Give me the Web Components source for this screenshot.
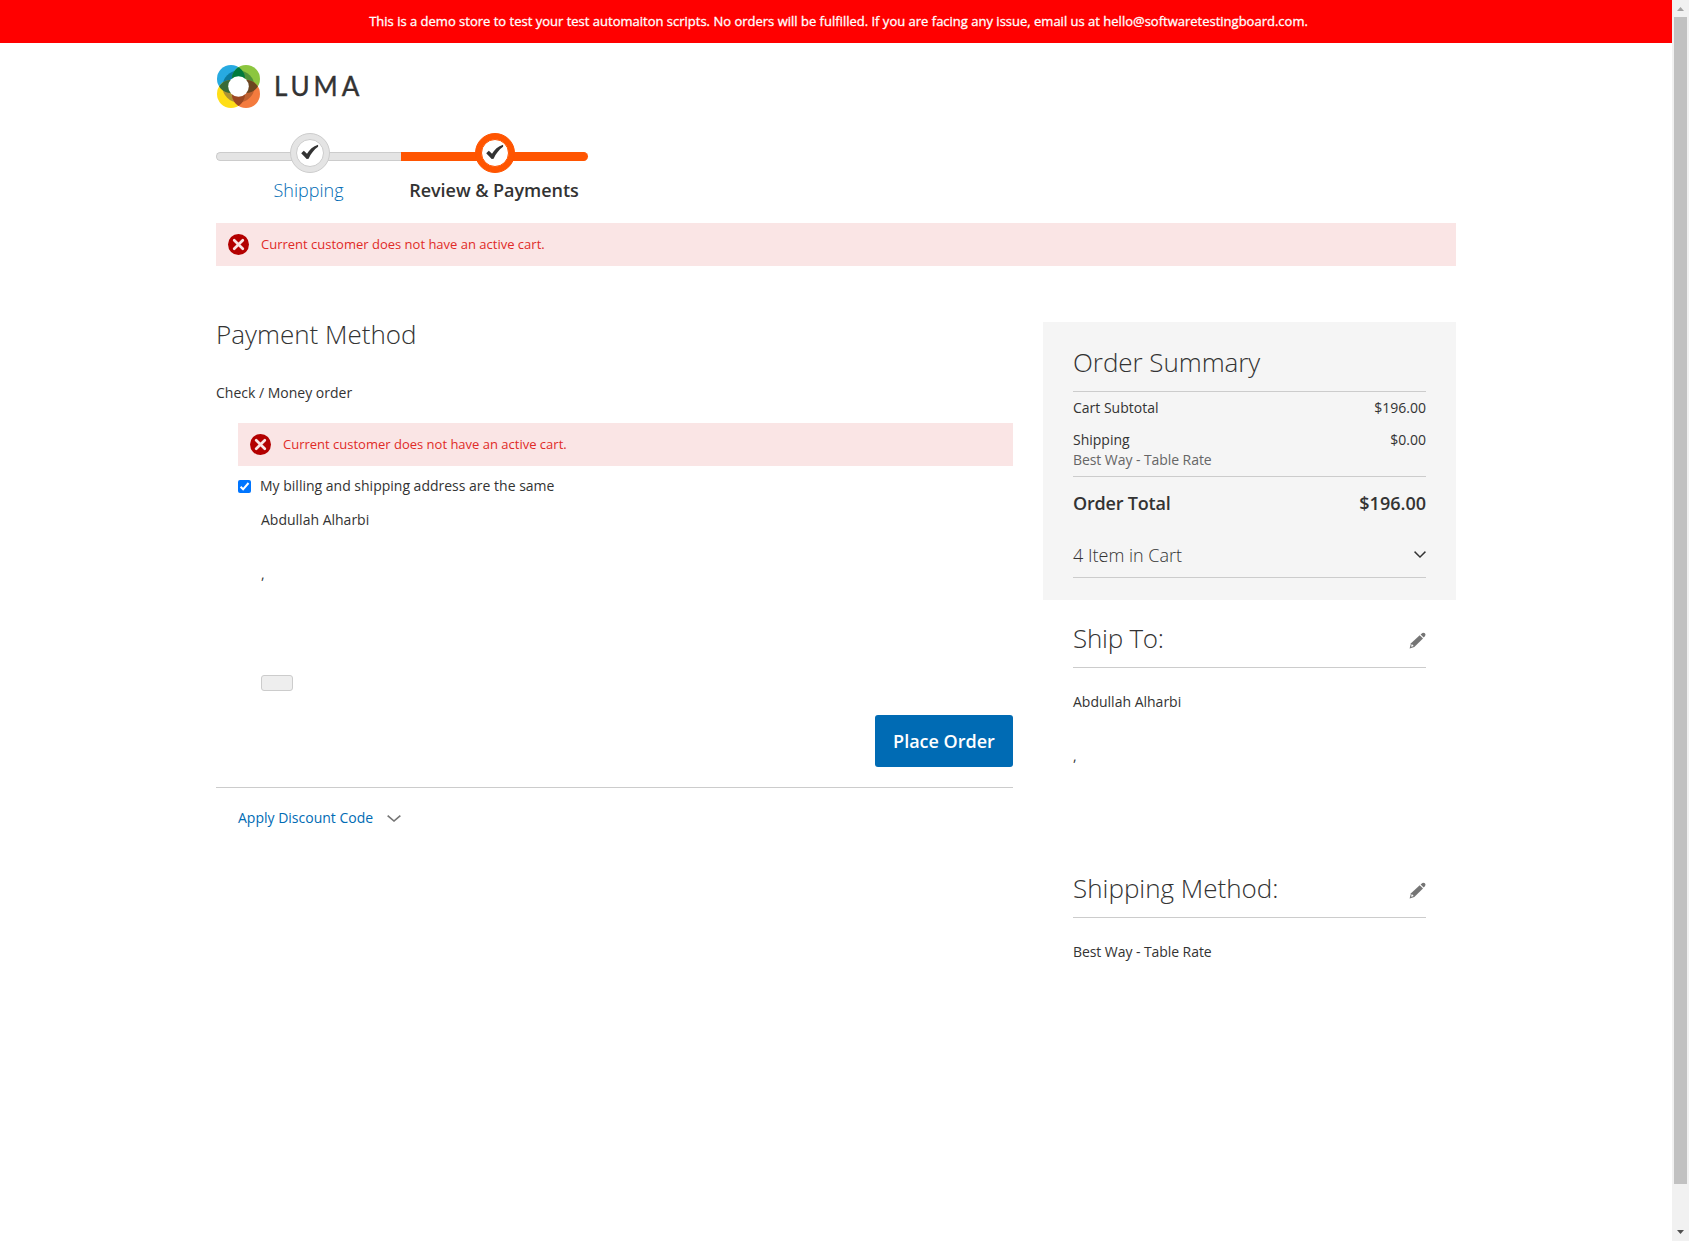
<!DOCTYPE html>
<html lang="en">
<head>
<meta charset="utf-8">
<title>Checkout</title>
<style>
html,body{margin:0;height:100%;overflow:hidden;background:#fff}
body{font:400 14px/20px "Open Sans","Noto Sans",sans-serif;color:#333}
</style>
</head>
<body>
<checkout-page></checkout-page>
<script>
function define(name, css, html) {
  customElements.define(name, class extends HTMLElement {
    constructor() {
      super();
      const root = this.attachShadow({mode: 'open'});
      const t = document.createElement('template');
      t.innerHTML = '<style>*{box-sizing:border-box}:host{display:block;box-sizing:border-box}' + css + '</style>' +
        (typeof html === 'function' ? html(this) : html);
      root.append(t.content.cloneNode(true));
    }
  });
}

define('demo-banner',
  ':host{height:43px;background:#f00;color:#fff;font-size:13px;font-weight:400;-webkit-text-stroke:.3px #fff;line-height:43px;text-align:center;white-space:nowrap;padding-left:5px}',
  '<span><slot></slot></span>');

define('luma-logo',
  ':host{display:flex;height:44px;align-items:center;gap:13px;padding-left:1px}svg{display:block;flex:none}span{font:400 26px/42px Lato,sans-serif;height:44px;letter-spacing:3.9px;-webkit-text-stroke:.4px #333}',
  `<svg width="44" height="44" viewBox="0 0 44 44">
    <defs><clipPath id="tl"><circle cx="14" cy="14" r="14"/></clipPath><clipPath id="tr"><circle cx="29" cy="14" r="14"/></clipPath><clipPath id="bl"><circle cx="14" cy="29" r="14"/></clipPath><clipPath id="br"><circle cx="29" cy="29" r="14"/></clipPath></defs>
    <circle cx="14" cy="14" r="14" fill="#27aae1"/><circle cx="29" cy="14" r="14" fill="#8cc63f"/>
    <circle cx="14" cy="29" r="14" fill="#ffde17"/><circle cx="29" cy="29" r="14" fill="#f47b3e"/>
    <g clip-path="url(#tl)"><circle cx="21.5" cy="21.5" r="16" fill="#0c7a9c"/></g>
    <g clip-path="url(#tr)"><circle cx="21.5" cy="21.5" r="16" fill="#4f9138"/></g>
    <g clip-path="url(#bl)"><circle cx="21.5" cy="21.5" r="16" fill="#ad9233"/></g>
    <g clip-path="url(#br)"><circle cx="21.5" cy="21.5" r="16" fill="#bf602f"/></g>
    <g clip-path="url(#tl)"><circle cx="29" cy="14" r="14" fill="#007a3d"/><circle cx="14" cy="29" r="14" fill="#386b36"/></g>
    <g clip-path="url(#br)"><circle cx="29" cy="14" r="14" fill="#6b4520"/><circle cx="14" cy="29" r="14" fill="#9b4722"/></g>
    <circle cx="21.5" cy="21.5" r="10.3" fill="#fff"/>
  </svg><span>LUMA</span>`);

define('progress-step',
  `:host{display:grid;width:185px;grid-template-rows:40px 34px;justify-items:center;--fill:#e4e4e4;--edge:#ccc;font-size:18px;font-weight:300;color:#006bb4;white-space:nowrap}
   :host([active]){--fill:#ff5501;--edge:#ff5501;font-weight:600;color:#333;width:187px}
   .bar{grid-area:1/1;justify-self:stretch;height:9px;margin-top:19px;background:var(--fill);border:1px solid var(--edge);border-right:0;border-radius:6px 0 0 6px}
   :host([active]) .bar{border-radius:0 6px 6px 0}
   svg{grid-area:1/1;display:block;margin-left:3px}
   .label{line-height:34px}
   :host([active]) svg{margin-left:1px}:host([active]) .label{margin-left:-1px;letter-spacing:-.04px}`,
  `<div class="bar"></div><svg width="40" height="40" viewBox="0 0 40 40"><circle cx="20" cy="20" r="19.5" fill="var(--fill)" stroke="var(--edge)"/><circle cx="20" cy="20" r="13.5" fill="#fff" stroke="var(--edge)"/><path d="M11.2 20.2 13.8 17.7 17 20.8C19.3 16.8 23 13.4 28.1 11.8V13.8C24 16.6 20.9 20.7 18.6 25.7L16.7 26Z" fill="#333"/></svg><div class="label"><slot></slot></div>`);

define('error-message',
  ':host{display:flex;height:43px;align-items:center;gap:12px;padding-left:12px;background:#fae5e5;color:#e02b27;font-size:13px;line-height:18px}svg{display:block;flex:none}span{padding-bottom:2px}',
  '<svg width="21" height="21" viewBox="0 0 21 21"><circle cx="10.5" cy="10.5" r="10.5" fill="#b30000"/><path d="M6.2 6.2 14.8 14.8M14.8 6.2 6.2 14.8" stroke="#fae5e5" stroke-width="2.7" stroke-linecap="round"/></svg><span><slot></slot></span>');

define('address-block', ':host{line-height:27px}.city{height:27px;margin-top:27px}',
  '<div><slot></slot></div><div class="city">,</div>');

define('chevron-icon', 'svg{display:block}',
  el => `<svg width="${el.getAttribute('size')}" height="7" viewBox="0 0 13 7" preserveAspectRatio="none"><path d="M.6.6 6.5 6 12.4.6" fill="none" stroke="currentColor" stroke-width="1.5"/></svg>`);

define('payment-section',
  `:host{width:797px;padding-top:50px}
   h2{margin:0;font-size:26px;font-weight:300;line-height:36px}
   .method{margin-top:26px;line-height:27px;height:27px;padding-top:1px}
   .content{padding-left:22px;margin-top:18px}
   .same{display:flex;align-items:center;gap:9px;height:20px;margin-top:10px}
   .check{display:block;flex:none;margin-top:1px}
   address-block{padding-left:23px;margin-top:10px}
   .blank{display:block;width:32px;height:16px;margin:88px 0 0 23px;padding:0;background:#eee;border:1px solid #ccc;border-radius:3px}
   .actions{display:flex;justify-content:flex-end;margin-top:24px}
   .place{width:138px;height:52px;border:0;border-radius:3px;background:#006bb4;color:#fff;font-family:inherit;font-size:18px;font-weight:600;line-height:52px;padding:0;white-space:nowrap}
   .discount{display:flex;align-items:center;gap:14px;margin-top:20px;border-top:1px solid #ccc;padding:20px 0 0 22px;color:#006bb4}
   chevron-icon{color:#757575;margin-top:1px}`,
  `<h2>Payment Method</h2><div class="method">Check / Money order</div>
   <div class="content"><error-message>Current customer does not have an active cart.</error-message>
   <div class="same"><svg class="check" width="13" height="13" viewBox="0 0 13 13"><rect width="13" height="13" rx="2" fill="#0075ff"/><path d="M2.6 6.8 5.1 9.3 10.5 3" fill="none" stroke="#fff" stroke-width="2"/></svg><span>My billing and shipping address are the same</span></div>
   <address-block>Abdullah Alharbi</address-block><button class="blank" aria-label="Edit"></button>
   <div class="actions"><button class="place">Place Order</button></div></div>
   <div class="discount"><span>Apply Discount Code</span><chevron-icon size="14"></chevron-icon></div>`);

define('price-row', ':host{display:flex;justify-content:space-between;line-height:20px}:host([total]){font-size:18px;font-weight:600;line-height:26px}:host([total]) .name{letter-spacing:-.2px}',
  '<span class="name"><slot></slot></span><span><slot name="price"></slot></span>');

define('order-summary',
  `:host{height:278px;padding:21px 30px 0;background:#f5f5f5}
   h2{margin:0;height:49px;border-bottom:1px solid #ccc;font-size:26px;font-weight:300;line-height:38px;letter-spacing:-.05px}
   .rows{padding-top:6px;border-bottom:1px solid #ccc;height:85px}
   .ship{margin-top:12px}.carrier{color:#666;letter-spacing:-.07px}
   .total{margin-top:13px}
   .items{display:flex;justify-content:space-between;align-items:center;margin-top:24px;height:38px;padding-bottom:7px;border-bottom:1px solid #ccc;font-size:18px;font-weight:300;line-height:28px}
   chevron-icon{margin-top:-2px}`,
  `<h2>Order Summary</h2><div class="rows"><price-row>Cart Subtotal<span slot="price">$196.00</span></price-row>
   <price-row class="ship">Shipping<span slot="price">$0.00</span></price-row><div class="carrier">Best Way - Table Rate</div></div>
   <price-row total class="total">Order Total<span slot="price">$196.00</span></price-row>
   <div class="items"><span>4 Item in Cart</span><chevron-icon size="12"></chevron-icon></div>`);

define('info-block',
  `:host{margin:0 30px;height:250px}
   header{display:flex;justify-content:space-between;align-items:center;height:48px;padding-bottom:11px;border-bottom:1px solid #ccc}
   h2{margin:0;font-size:26px;font-weight:300;line-height:38px}
   :host([tight]) h2{letter-spacing:-.25px}
   svg{display:block;margin:5px 0 0}
   .body{padding-top:20px;line-height:27px}`,
  el => `<header><h2>${el.getAttribute('heading')}</h2><svg width="17" height="17" viewBox="0 0 17 17"><path d="M.6 16.4 2 11.2 10.7 3.2 14 6.5 5.3 15Z" fill="#757575"/><path d="M11.6 2.5 13.4 1Q14.8.2 15.9 1.3 17 2.6 16.1 4L14.7 5.6Z" fill="#757575"/><path d="M2.8 12.1 4.7 13.9 2.5 14.7 2.1 14.3Z" fill="#fff"/></svg></header><div class="body"><slot></slot></div>`);

define('page-scrollbar',
  ':host{display:flex;flex-direction:column;align-items:center;width:17px;height:1241px;background:#f1f1f1}svg{display:block;flex:none}.thumb{width:13px;height:1167px;background:#c1c1c1}.track{flex:1}',
  '<svg width="17" height="17"><path d="M5 11h7L8.5 7Z" fill="#a3a3a3"/></svg><div class="thumb"></div><div class="track"></div><svg width="17" height="17"><path d="M5 6h7L8.5 10Z" fill="#505050"/></svg>');

define('checkout-page',
  `:host{display:flex;height:1241px}
   .view{width:1672px}
   .wrap{width:1240px;margin:0 auto}
   luma-logo{margin-top:22px}
   .steps{display:flex;margin-top:24px}
   .top{margin-top:16px}
   .cols{display:flex;justify-content:space-between}
   aside{width:413px;padding-top:56px}
   .shipto{margin-top:20px}
   .rate{letter-spacing:-.07px}`,
  `<div class="view"><demo-banner>This is a demo store to test your test automaiton scripts. No orders will be fulfilled. If you are facing any issue, email us at hello@softwaretestingboard.com.</demo-banner>
   <div class="wrap"><luma-logo></luma-logo>
   <div class="steps"><progress-step>Shipping</progress-step><progress-step active>Review &amp; Payments</progress-step></div>
   <error-message class="top">Current customer does not have an active cart.</error-message>
   <div class="cols"><payment-section></payment-section><aside><order-summary></order-summary>
   <info-block tight class="shipto" heading="Ship To:"><address-block>Abdullah Alharbi</address-block></info-block>
   <info-block heading="Shipping Method:"><span class="rate">Best Way - Table Rate</span></info-block></aside></div></div></div>
   <page-scrollbar></page-scrollbar>`);
</script>
</body>
</html>
